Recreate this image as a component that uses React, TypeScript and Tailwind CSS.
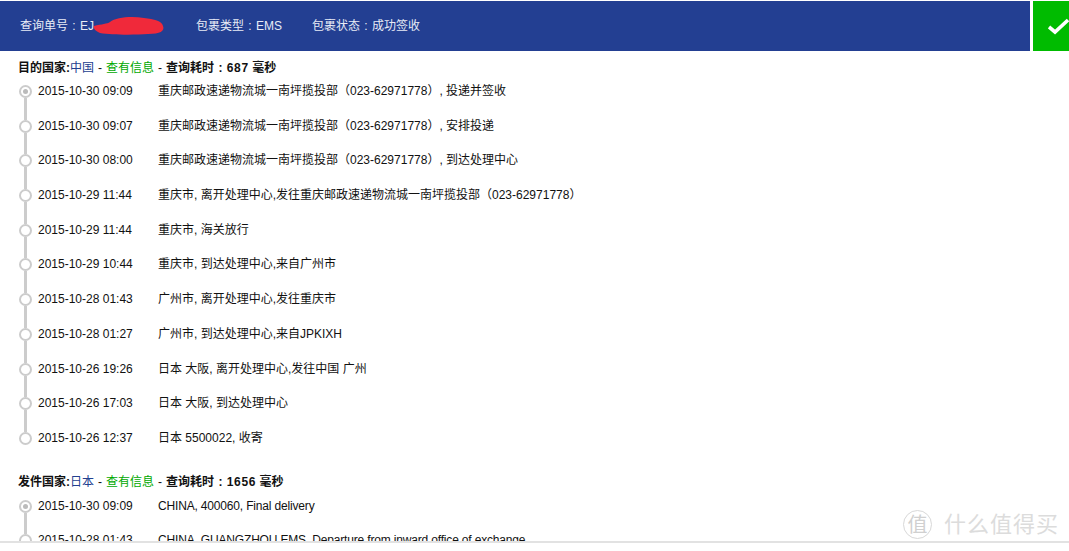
type Row = { time: string; text: string };

const destRows: Row[] = [
  { time: '2015-10-30 09:09', text: '重庆邮政速递物流城一南坪揽投部（023-62971778）, 投递并签收' },
  { time: '2015-10-30 09:07', text: '重庆邮政速递物流城一南坪揽投部（023-62971778）, 安排投递' },
  { time: '2015-10-30 08:00', text: '重庆邮政速递物流城一南坪揽投部（023-62971778）, 到达处理中心' },
  { time: '2015-10-29 11:44', text: '重庆市, 离开处理中心,发往重庆邮政速递物流城一南坪揽投部（023-62971778）' },
  { time: '2015-10-29 11:44', text: '重庆市, 海关放行' },
  { time: '2015-10-29 10:44', text: '重庆市, 到达处理中心,来自广州市' },
  { time: '2015-10-28 01:43', text: '广州市, 离开处理中心,发往重庆市' },
  { time: '2015-10-28 01:27', text: '广州市, 到达处理中心,来自JPKIXH' },
  { time: '2015-10-26 19:26', text: '日本 大阪, 离开处理中心,发往中国 广州' },
  { time: '2015-10-26 17:03', text: '日本 大阪, 到达处理中心' },
  { time: '2015-10-26 12:37', text: '日本 5500022, 收寄' },
];

const originRows: Row[] = [
  { time: '2015-10-30 09:09', text: 'CHINA, 400060, Final delivery' },
  { time: '2015-10-28 01:43', text: 'CHINA, GUANGZHOU EMS, Departure from inward office of exchange' },
];

function Timeline({ rows, textClass = '' }: { rows: Row[]; textClass?: string }) {
  return (
    <ul className="flex flex-col">
      {rows.map((row, index) => (
        <li key={row.time + index} className="flex h-[34.7px] pl-[19px]">
          <div className="flex w-[13px] flex-col items-center">
            <span className="flex h-[13px] w-[13px] shrink-0 items-center justify-center rounded-full border-2 border-[#cccccc] bg-white">
              {index === 0 && <span className="h-[5px] w-[5px] rounded-full bg-[#bbbbbb]" />}
            </span>
            {index < rows.length - 1 && <span className="w-[3px] flex-1 bg-[#cccccc]" />}
          </div>
          <span className="ml-[6px] w-[120px] shrink-0 text-[12px] leading-[13px] text-[#111111]">{row.time}</span>
          <span className={`whitespace-nowrap text-[12px] leading-[13px] text-[#111111] ${textClass}`}>{row.text}</span>
        </li>
      ))}
    </ul>
  );
}

function Heading({ label, country, ms }: { label: string; country: string; ms: string }) {
  return (
    <p className="flex pl-[18px] text-[12px] leading-[16px] font-bold whitespace-pre text-[#111111]">
      <span>{label}:</span>
      <span className="font-normal text-[#23408f]">{country}</span>
      <span className="mx-[4px] font-normal">-</span>
      <span className="font-normal text-[#00a800]">查有信息</span>
      <span className="mx-[4px] font-normal">-</span>
      <span className="[word-spacing:1px]">查询耗时 : </span>
      <span className="tracking-[0.7px]">{ms}</span>
      <span> 毫秒</span>
    </p>
  );
}

export default function App() {
  return (
    <div className="relative h-[551px] w-[1069px] overflow-hidden bg-white font-['Liberation_Sans','Noto_Sans_CJK_SC',sans-serif]">
      <div className="flex h-[541px] flex-col overflow-hidden pt-px">
        <header className="flex h-[50px] shrink-0 gap-[3px]">
          <div className="relative flex flex-1 items-center bg-[#233f92] pl-[20px] text-[12px] text-[#e8ecf6] [word-spacing:1px]">
            <span className="w-[176px]">查询单号 : EJ</span>
            <span className="w-[116px]">包裹类型 : EMS</span>
            <span>包裹状态 : 成功签收</span>
            <svg className="absolute top-[15px] left-[92px] h-[20px] w-[74px]" viewBox="0 0 74 20">
              <path
                d="M2 10 C10 8 15 8 18 6 C24 1 40 0 52 2 C62 3 70 5 71 10 C73 15 68 18 56 18 C42 19 20 19 8 17 C4 15 1 13 2 10 Z"
                fill="#f0293a"
              />
            </svg>
          </div>
          <div className="flex w-[36px] items-center bg-[#00bb00]">
            <svg className="ml-[15px] h-[20px] w-[21px]" viewBox="0 0 21 20">
              <path d="M1 11 L7 16 L20 4" fill="none" stroke="#ffffff" strokeWidth="3.6" />
            </svg>
          </div>
        </header>
        <main className="pt-[9px]">
          <Heading label="目的国家" country="中国" ms="687" />
          <div className="mt-[9px]">
            <Timeline rows={destRows} />
          </div>
          <div className="mt-[7px]">
            <Heading label="发件国家" country="日本" ms="1656" />
          </div>
          <div className="mt-[10px]">
            <Timeline rows={originRows} textClass="tracking-[-0.17px]" />
          </div>
        </main>
      </div>
      <div className="h-[2px] bg-[#e2e2e2]" />
      <div className="absolute top-[510px] left-[903px] flex items-center">
        <span className="flex h-[29px] w-[29px] items-center justify-center rounded-full border border-[#d8d8d8] bg-white/60 text-[20px] leading-none text-[#d0d0d0]">
          值
        </span>
        <span className="ml-[12px] text-[22px] leading-none tracking-[1px] text-[#dcdcdc]">什么值得买</span>
      </div>
    </div>
  );
}
